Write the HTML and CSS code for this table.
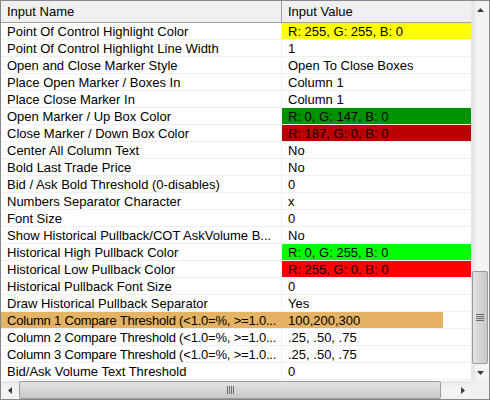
FILE: index.html
```html
<!DOCTYPE html>
<html>
<head>
<meta charset="utf-8">
<link rel="stylesheet" href="styles.css">
</head>
<body>
<div class="frame">
  <div class="grid">
    <div class="row head">
      <div class="cell name">Input Name</div>
      <div class="cell val">Input Value</div>
    </div>
    <div class="row"><div class="cell name">Point Of Control Highlight Color</div><div class="cell val c-yellow">R: 255, G: 255, B: 0</div></div>
    <div class="row"><div class="cell name">Point Of Control Highlight Line Width</div><div class="cell val">1</div></div>
    <div class="row"><div class="cell name">Open and Close Marker Style</div><div class="cell val">Open To Close Boxes</div></div>
    <div class="row"><div class="cell name">Place Open Marker / Boxes In</div><div class="cell val">Column 1</div></div>
    <div class="row"><div class="cell name">Place Close Marker In</div><div class="cell val">Column 1</div></div>
    <div class="row"><div class="cell name">Open Marker / Up Box Color</div><div class="cell val c-green">R: 0, G: 147, B: 0</div></div>
    <div class="row"><div class="cell name">Close Marker / Down Box Color</div><div class="cell val c-darkred">R: 187, G: 0, B: 0</div></div>
    <div class="row"><div class="cell name">Center All Column Text</div><div class="cell val">No</div></div>
    <div class="row"><div class="cell name">Bold Last Trade Price</div><div class="cell val">No</div></div>
    <div class="row"><div class="cell name">Bid / Ask Bold Threshold (0-disables)</div><div class="cell val">0</div></div>
    <div class="row"><div class="cell name">Numbers Separator Character</div><div class="cell val">x</div></div>
    <div class="row"><div class="cell name">Font Size</div><div class="cell val">0</div></div>
    <div class="row"><div class="cell name">Show Historical Pullback/COT AskVolume B...</div><div class="cell val">No</div></div>
    <div class="row"><div class="cell name">Historical High Pullback Color</div><div class="cell val c-lime">R: 0, G: 255, B: 0</div></div>
    <div class="row"><div class="cell name">Historical Low Pullback Color</div><div class="cell val c-red">R: 255, G: 0, B: 0</div></div>
    <div class="row"><div class="cell name">Historical Pullback Font Size</div><div class="cell val">0</div></div>
    <div class="row"><div class="cell name">Draw Historical Pullback Separator</div><div class="cell val">Yes</div></div>
    <div class="row selected"><div class="cell name tight">Column 1 Compare Threshold (&lt;1.0=%, &gt;=1.0...</div><div class="cell val">100,200,300</div></div>
    <div class="row"><div class="cell name tight">Column 2 Compare Threshold (&lt;1.0=%, &gt;=1.0...</div><div class="cell val">.25, .50, .75</div></div>
    <div class="row"><div class="cell name tight">Column 3 Compare Threshold (&lt;1.0=%, &gt;=1.0...</div><div class="cell val">.25, .50, .75</div></div>
    <div class="row"><div class="cell name">Bid/Ask Volume Text Threshold</div><div class="cell val">0</div></div>
  </div>
  <div class="vscroll">
    <div class="arrow"><svg width="7" height="4" viewBox="0 0 7 4"><path d="M3.5 0 L7 4 L0 4 Z" fill="#3c3c3c"/></svg></div>
    <div class="vtrack">
      <div class="vthumb"><svg width="8" height="7" viewBox="0 0 8 7"><path d="M0 0.5H8M0 2.5H8M0 4.5H8M0 6.5H8" stroke="#6a6a6a" stroke-width="1"/></svg></div>
    </div>
    <div class="arrow"><svg width="7" height="4" viewBox="0 0 7 4"><path d="M0 0 L7 0 L3.5 4 Z" fill="#3c3c3c"/></svg></div>
  </div>
  <div class="hscroll">
    <div class="harrow"><svg width="4" height="7" viewBox="0 0 4 7"><path d="M4 0 L4 7 L0 3.5 Z" fill="#3c3c3c"/></svg></div>
    <div class="htrack">
      <div class="hthumb"><svg width="7" height="8" viewBox="0 0 7 8"><path d="M0.5 0V8M2.5 0V8M4.5 0V8M6.5 0V8" stroke="#6a6a6a" stroke-width="1"/></svg></div>
    </div>
    <div class="harrow"><svg width="4" height="7" viewBox="0 0 4 7"><path d="M0 0 L4 3.5 L0 7 Z" fill="#3c3c3c"/></svg></div>
  </div>
  <div class="corner"></div>
</div>
</body>
</html>
```

FILE: styles.css
```css
html, body {
  margin: 0;
  padding: 0;
  background: #ffffff;
}
.frame {
  width: 490px;
  height: 400px;
  box-sizing: border-box;
  border: 1px solid #828790;
  display: grid;
  grid-template-columns: 470px 18px;
  grid-template-rows: 380px 18px;
  font-family: "Liberation Sans", Arial, sans-serif;
  font-size: 13px;
  color: #000;
  overflow: hidden;
}
.grid {
  overflow: hidden;
  background: #fff;
}
.row {
  display: grid;
  grid-template-columns: 281px 1fr;
  height: 17px;
}
.cell {
  box-sizing: border-box;
  height: 17px;
  line-height: 16px;
  padding-top: 1px;
  padding-left: 6px;
  white-space: nowrap;
  border-bottom: 1px solid #f0f0f0;
}
.cell.name {
  border-right: 1px solid #f0f0f0;
  overflow: hidden;
}
.cell.tight {
  letter-spacing: -0.2px;
}
.cell.val {
  padding-left: 6px;
}
.row.head {
  height: 22px;
  background: #f0f0f0;
}
.row.head .cell {
  height: 22px;
  line-height: 21px;
  padding-top: 0;
  border-bottom: 1px solid #a0a0a0;
}
.row.head .cell.name {
  border-right: 1px solid #a0a0a0;
}
.c-yellow { background: #ffff00; }
.c-green { background: #009300; }
.c-darkred { background: #bb0000; }
.c-lime { background: #00ff00; }
.c-red { background: #ff0000; }
.row.selected {
  background: linear-gradient(90deg, #e5b364 0 442px, transparent 442px);
}
.row.selected .cell.name {
  border-right-color: transparent;
}
.vscroll {
  display: flex;
  flex-direction: column;
  background: linear-gradient(90deg, #e3e3e3, #f3f3f3 30%, #f3f3f3);
  border-left: 1px solid #e6e6e6;
}
.arrow {
  height: 17px;
  display: flex;
  align-items: center;
  justify-content: center;
  flex: none;
}
.vtrack {
  flex: 1;
  display: flex;
  flex-direction: column;
  justify-content: flex-end;
  padding: 0 1px 0 0;
}
.vthumb {
  height: 93px;
  box-sizing: border-box;
  border: 1px solid #9a9a9a;
  border-radius: 2px;
  background: linear-gradient(90deg, #e4e4e4, #d2d2d2 60%, #c8c8c8);
  display: flex;
  align-items: center;
  justify-content: center;
}
.hscroll {
  display: flex;
  background: linear-gradient(180deg, #e3e3e3, #f3f3f3 30%, #f3f3f3);
}
.harrow {
  width: 17px;
  display: flex;
  align-items: center;
  justify-content: center;
  flex: none;
}
.htrack {
  flex: 1;
  display: flex;
  padding-left: 1px;
}
.hthumb {
  width: 422px;
  box-sizing: border-box;
  border: 1px solid #9a9a9a;
  border-radius: 2px;
  background: linear-gradient(180deg, #e4e4e4, #d2d2d2 60%, #c8c8c8);
  display: flex;
  align-items: center;
  justify-content: center;
}
.corner {
  background: #f0f0f0;
}
```
